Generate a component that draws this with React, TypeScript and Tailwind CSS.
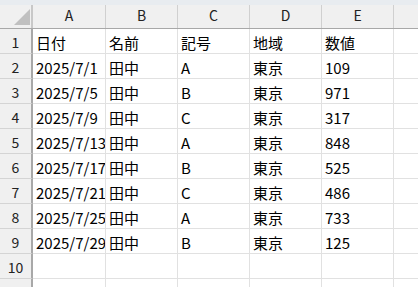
import React from "react";

const rows = [
  ["日付", "名前", "記号", "地域", "数値"],
  ["2025/7/1", "田中", "A", "東京", "109"],
  ["2025/7/5", "田中", "B", "東京", "971"],
  ["2025/7/9", "田中", "C", "東京", "317"],
  ["2025/7/13", "田中", "A", "東京", "848"],
  ["2025/7/17", "田中", "B", "東京", "525"],
  ["2025/7/21", "田中", "C", "東京", "486"],
  ["2025/7/25", "田中", "A", "東京", "733"],
  ["2025/7/29", "田中", "B", "東京", "125"],
  ["", "", "", "", ""],
  ["", "", "", "", ""],
];

const colWidths = ["w-[73px]", "w-[72px]", "w-[72px]", "w-[72px]", "w-[72px]"];
const letters = ["A", "B", "C", "D", "E"];

const App = () => {
  return (
    <div
      className="w-[418px] h-[287px] overflow-hidden bg-white text-black"
      style={{ fontFamily: '"Noto Sans CJK JP", "Noto Sans", sans-serif' }}
    >
      <div className="h-[5px] bg-[#e8ecf0]" />
      <div className="flex h-[24px] bg-[#f0f0f0] border-b border-[#a8a8a8]">
        <div className="relative w-[33px] shrink-0 border-r-2 border-[#c8c8c8]">
          <div
            className="absolute left-[14px] top-[4px] w-0 h-0 border-l-[16px] border-l-transparent border-b-[16px] border-b-[#c0c0c0]"
          />
        </div>
        {letters.map((l, i) => (
          <div
            key={l}
            className={`${colWidths[i]} shrink-0 flex justify-center pt-[3px] text-[14px] leading-none text-[#222] border-r border-[#d0d0d0]`}
          >
            {l}
          </div>
        ))}
        <div className="flex-1" />
      </div>
      {rows.map((row, r) => (
        <div key={r} className="flex h-[25px]">
          <div className="w-[33px] shrink-0 flex items-center justify-center pt-[1px] text-[14px] leading-none text-[#222] bg-[#f0f0f0] border-r-2 border-b border-r-[#a8a8a8] border-b-[#d4d4d4]">
            {r < 10 ? r + 1 : ""}
          </div>
          {row.map((v, c) => (
            <div
              key={c}
              className={`${colWidths[c]} shrink-0 flex items-center pl-[3px] pt-[2px] text-[15px] leading-none whitespace-nowrap overflow-hidden border-r border-b border-[#e1e1e1]`}
            >
              {v}
            </div>
          ))}
          <div className="flex-1 border-b border-[#e1e1e1]" />
        </div>
      ))}
    </div>
  );
};

export default App;
